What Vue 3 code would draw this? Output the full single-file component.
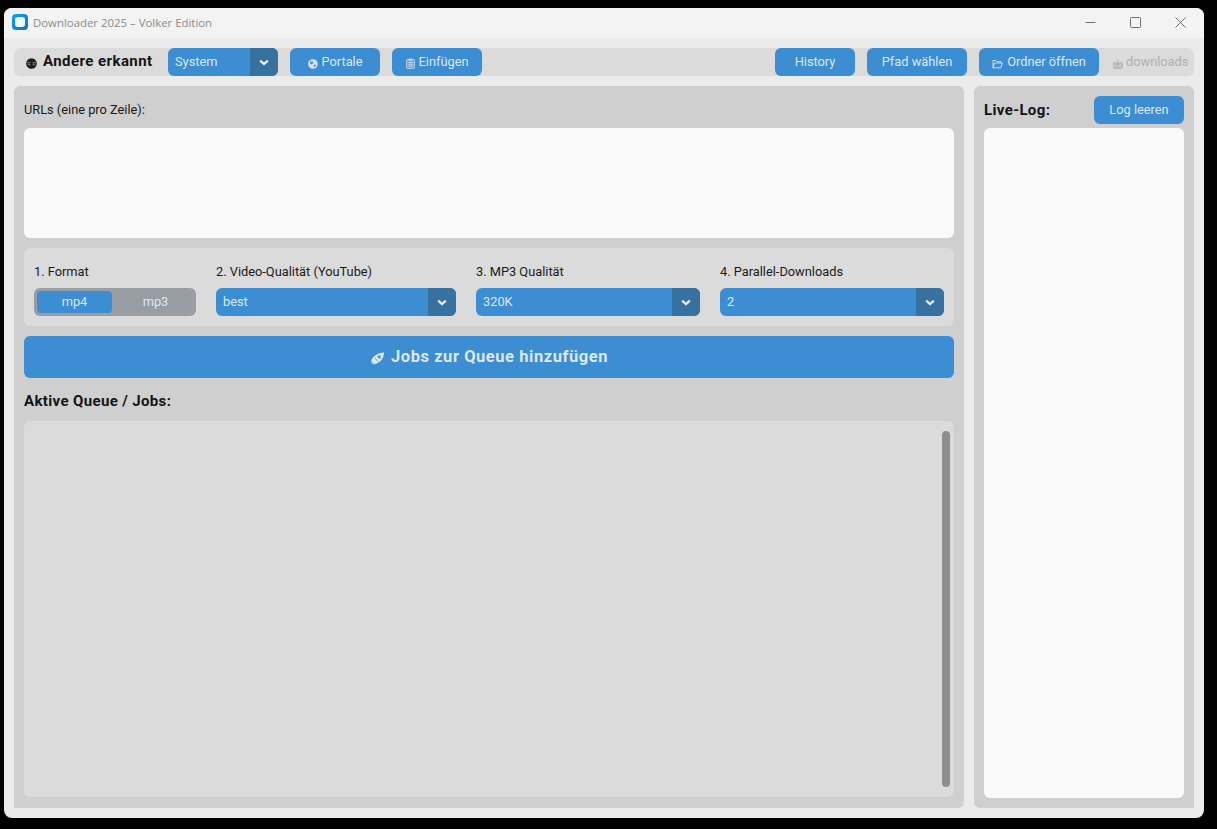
<script setup>
const options = [
  { label: '2. Video-Qualität (YouTube)', value: 'best', cls: 'col-video' },
  { label: '3. MP3 Qualität', value: '320K', cls: 'col-mp3' },
  { label: '4. Parallel-Downloads', value: '2', cls: 'col-par' },
]
</script>

<template>
  <div class="window">
    <header class="titlebar">
      <div class="app-icon"><span></span></div>
      <span class="title">Downloader 2025 – Volker Edition</span>
      <div class="win-controls">
        <svg width="11" height="11" viewBox="0 0 11 11"><path d="M0.5 5.5H10.5" stroke="#6e6e6e" fill="none"/></svg>
        <svg width="11" height="11" viewBox="0 0 11 11"><rect x="0.5" y="0.5" width="10" height="10" rx="1" stroke="#6e6e6e" fill="none"/></svg>
        <svg width="11" height="11" viewBox="0 0 11 11"><path d="M0.5 0.5L10.5 10.5M10.5 0.5L0.5 10.5" stroke="#6e6e6e" fill="none"/></svg>
      </div>
    </header>

    <div class="content">
      <div class="toolbar">
        <svg class="status-icon" width="11" height="11" viewBox="0 0 12 12">
          <circle cx="6" cy="6" r="5.8" fill="#1d1d1f"/>
          <path d="M1 5.2H5M7 5.2H11M2 7.4H5M7 7.4H10" stroke="#9a9474" stroke-width="1" fill="none"/>
        </svg>
        <strong class="status">Andere erkannt</strong>
        <div class="select sys"><span class="sel-value">System</span><span class="sel-arrow"><svg width="10" height="7" viewBox="0 0 10 7"><path d="M1.2 1.6L5 5L8.8 1.6" stroke="#f0f4f8" stroke-width="2.2" fill="none"/></svg></span></div>
        <button class="btn portale">
          <svg width="10" height="10" viewBox="0 0 10 10"><circle cx="5" cy="5" r="4.8" fill="#d4e2ef"/><path d="M2 2.6L4.6 2.2L5.4 4L3.6 5.4L2 4.4ZM6 5.4L8.4 5.8L6.6 8.6L5.6 7.4Z" fill="#6d8daa"/></svg>
          Portale
        </button>
        <button class="btn einfuegen">
          <svg width="9" height="11" viewBox="0 0 9 11"><rect x="0.6" y="1.4" width="7.8" height="9.2" rx="0.8" fill="#6ea6d8" stroke="#cfdfed" stroke-width="0.8"/><path d="M3 1H6V2.4H3ZM2.2 4.5H6.8M2.2 6.3H6.8M2.2 8.1H6.8" stroke="#cfdfed" stroke-width="0.8" fill="none"/></svg>
          Einfügen
        </button>
        <div class="spacer"></div>
        <button class="btn history">History</button>
        <button class="btn pfad">Pfad wählen</button>
        <button class="btn ordner">
          <svg width="11" height="10" viewBox="0 0 11 10"><path d="M1 8.8V1.5H4L5 2.7H9V4M1 8.8L2.6 4H10.4L8.8 8.8Z" stroke="#dbe7f2" stroke-width="0.9" fill="none"/></svg>
          Ordner öffnen
        </button>
        <span class="path">
          <svg width="10" height="10" viewBox="0 0 10 10"><path d="M3 3.6H1.4Q0.7 3.6 0.7 4.3V8.6Q0.7 9.3 1.4 9.3H8.6Q9.3 9.3 9.3 8.6V4.3Q9.3 3.6 8.6 3.6H7" stroke="#b0b0b0" fill="#c6c6c6"/><path d="M5 0.4V6M3 4.2L5 6.2L7 4.2" stroke="#a8a8a8" fill="none"/></svg>
          downloads
        </span>
      </div>

      <div class="main">
        <section class="panel left">
          <label class="urls-label">URLs (eine pro Zeile):</label>
          <div class="urls"></div>

          <div class="options">
            <div class="col col-format">
              <span class="opt-label">1. Format</span>
              <div class="segment">
                <span class="seg active">mp4</span>
                <span class="seg other">mp3</span>
              </div>
            </div>
            <div v-for="o in options" :key="o.label" class="col" :class="o.cls">
              <span class="opt-label">{{ o.label }}</span>
              <div class="select"><span class="sel-value">{{ o.value }}</span><span class="sel-arrow"><svg width="10" height="7" viewBox="0 0 10 7"><path d="M1.2 1.6L5 5L8.8 1.6" stroke="#f0f4f8" stroke-width="2.2" fill="none"/></svg></span></div>
            </div>
          </div>

          <button class="add">
            <svg width="15" height="15" viewBox="0 0 15 15"><path d="M1 9.8C3 5 7.500 1.500 14 1.400C14 7.500 10 11.500 5 13L3.600 14L3.600 12L1 12.500L2 10.800Z" fill="#dbe7f2"/><circle cx="9.200" cy="6" r="1.700" fill="#5f93c4"/><path d="M4.800 7L8 10.500" stroke="#5f93c4" stroke-width="0.9"/></svg>
            Jobs zur Queue hinzufügen
          </button>

          <h2 class="heading queue-head">Aktive Queue / Jobs:</h2>
          <div class="queue"><div class="scrollbar"></div></div>
        </section>

        <aside class="panel right">
          <div class="log-head">
            <h2 class="heading">Live-Log:</h2>
            <button class="btn clear">Log leeren</button>
          </div>
          <div class="log"></div>
        </aside>
      </div>
    </div>
  </div>
</template>

<style>
html, body { margin: 0; background: #000; }
</style>

<style scoped>
.window {
  width: 1200px;
  height: 810px;
  margin: 8px 0 0 4px;
  border-radius: 8px;
  background: #ebebeb;
  overflow: hidden;
  display: flex;
  flex-direction: column;
  font-family: Roboto, "Liberation Sans", sans-serif;
  font-size: 12.8px;
  color: #1a1a1a;
}
.titlebar {
  height: 30px;
  flex: none;
  box-sizing: border-box;
  padding-bottom: 2px;
  background: #f3f3f3;
  display: flex;
  align-items: center;
  padding-left: 8px;
}
.app-icon {
  width: 16px;
  height: 16px;
  border-radius: 4px;
  background: linear-gradient(135deg, #13a3f2, #0a6fd0);
  display: flex;
  align-items: center;
  justify-content: center;
}
.app-icon span { width: 10px; height: 10px; border-radius: 3px; background: #f4f8fc; }
.title {
  margin-left: 5px;
  font-family: "Open Sans", "Noto Sans", sans-serif;
  font-size: 11.4px;
  color: #8b8b8b;
}
.win-controls {
  margin-left: auto;
  display: flex;
  gap: 34px;
  padding-right: 18px;
  align-items: center;
}
.win-controls svg { display: block; }
.content {
  flex: 1;
  min-height: 0;
  padding: 10px;
  display: flex;
  flex-direction: column;
  gap: 10px;
}
.toolbar {
  height: 28px;
  flex: none;
  border-radius: 6px;
  background: #dbdbdb;
  display: flex;
  align-items: center;
}
.status-icon { margin-left: 12px; margin-top: 3px; flex: none; }
.status {
  margin-left: 6px;
  margin-bottom: 2px;
  width: 125px;
  font-size: 15px;
  font-weight: 700;
  letter-spacing: 0.43px;
  color: #141414;
  white-space: nowrap;
}
.select {
  height: 28px;
  border-radius: 6px;
  background: #3c8dd2;
  color: #dce8f3;
  display: flex;
  align-items: center;
  overflow: hidden;
}
.sys { width: 110px; flex: none; }
.sel-value { flex: 1; padding: 0 0 2px 7px; }
.sel-arrow {
  width: 28px;
  height: 100%;
  background: #36719f;
  display: flex;
  align-items: center;
  justify-content: center;
}
.btn {
  height: 28px;
  flex: none;
  border: none;
  border-radius: 6px;
  background: #3c8dd2;
  color: #dce8f3;
  font: inherit;
  padding: 0 0 2px;
  display: flex;
  align-items: center;
  justify-content: center;
  gap: 4px;
}
.btn svg { margin-top: 5px; }
.portale { width: 90px; margin-left: 12px; }
.einfuegen { width: 90px; margin-left: 12px; }
.spacer { flex: 1; }
.history { width: 80px; }
.pfad { width: 100px; margin-left: 12px; }
.ordner { width: 120px; margin-left: 12px; }
.path {
  width: 81px;
  flex: none;
  margin-left: 14px;
  padding-bottom: 2px;
  color: #b0b0b0;
  display: flex;
  align-items: center;
  gap: 3px;
  white-space: nowrap;
}
.path svg { margin-top: 5px; }
.main {
  flex: 1;
  min-height: 0;
  display: flex;
  gap: 10px;
}
.panel {
  background: #cfcfcf;
  border-radius: 6px;
  padding: 10px;
  box-sizing: border-box;
  display: flex;
  flex-direction: column;
}
.left { flex: 1; min-width: 0; border-bottom-left-radius: 0; }
.right { width: 220px; flex: none; border-bottom-right-radius: 1px; }
.urls-label { height: 32px; line-height: 27px; color: #1a1a1a; flex: none; }
.urls {
  height: 110px;
  flex: none;
  background: #fafafa;
  border-radius: 6px;
}
.options {
  margin-top: 10px;
  height: 78px;
  flex: none;
  box-sizing: border-box;
  padding: 10px;
  border-radius: 6px;
  background: #dbdbdb;
  display: flex;
  gap: 20px;
}
.col { display: flex; flex-direction: column; }
.col-format { width: 162px; }
.col-video { width: 240px; }
.col-mp3, .col-par { width: 224px; }
.opt-label { height: 30px; line-height: 27px; flex: none; }
.segment {
  height: 28px;
  border-radius: 6px;
  background: #989ca3;
  box-sizing: border-box;
  padding: 3px;
  display: flex;
  gap: 3px;
}
.seg {
  display: flex;
  align-items: center;
  justify-content: center;
  border-radius: 4px;
  color: #dce8f3;
  padding-bottom: 1px;
}
.seg.active { width: 75px; background: #3c8dd2; }
.seg.other { flex: 1; padding-left: 3px; }
.add {
  margin-top: 10px;
  height: 42px;
  flex: none;
  border: none;
  border-radius: 6px;
  background: #3c8dd2;
  color: #dce8f3;
  font: inherit;
  font-size: 16.5px;
  font-weight: 700;
  letter-spacing: 0.55px;
  padding: 0 0 2px;
  display: flex;
  align-items: center;
  justify-content: center;
  gap: 6px;
}
.add svg { margin-top: 5px; }
.heading {
  margin: 0;
  font-size: 15px;
  font-weight: 700;
  letter-spacing: 0.36px;
  color: #141414;
}
.queue-head { height: 43px; line-height: 47px; flex: none; }
.queue {
  flex: 1;
  min-height: 0;
  margin-bottom: 1px;
  border-radius: 6px;
  background: #dbdbdb;
  padding: 10px 4px 10px 0;
  display: flex;
  justify-content: flex-end;
}
.scrollbar {
  width: 8px;
  border-radius: 4px;
  background: #8e8e8e;
}
.log-head {
  height: 32px;
  flex: none;
  display: flex;
  justify-content: space-between;
  align-items: flex-start;
}
.log-head .heading { line-height: 28px; }
.clear { width: 90px; }
.log {
  flex: 1;
  min-height: 0;
  background: #fafafa;
  border-radius: 6px;
}
</style>
